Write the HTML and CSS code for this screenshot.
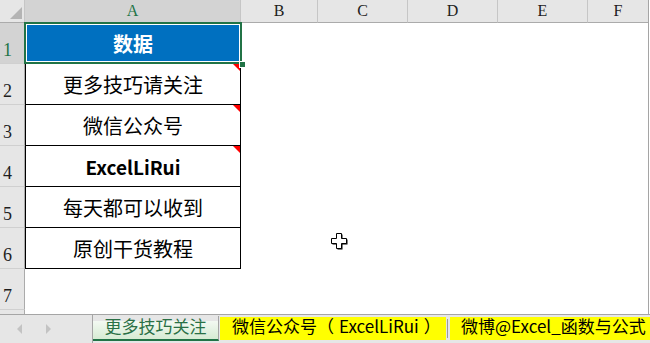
FILE: index.html
```html
<!DOCTYPE html>
<html lang="zh-CN">
<head>
    <meta charset="UTF-8">
    <meta name="viewport" content="width=device-width, initial-scale=1.0">
    <title>数据</title>
    <link rel="stylesheet" href="styles.css">
</head>
<body>

<div class="sheet">
    <div class="head">
        <div class="corner"><span class="corner-tri"></span></div>
        <div class="ch ch-a active">A</div>
        <div class="ch ch-b">B</div>
        <div class="ch ch-mid">C</div>
        <div class="ch ch-mid">D</div>
        <div class="ch ch-mid">E</div>
        <div class="ch ch-f">F</div>
    </div>

    <div class="row">
        <div class="rh active">1</div>
        <div class="cell title">数据<span class="sel"></span><span class="handle"></span></div>
    </div>
    <div class="row">
        <div class="rh">2</div>
        <div class="cell boxed note">更多技巧请关注</div>
    </div>
    <div class="row">
        <div class="rh">3</div>
        <div class="cell boxed note">微信公众号</div>
    </div>
    <div class="row">
        <div class="rh">4</div>
        <div class="cell boxed note bold">ExcelLiRui</div>
    </div>
    <div class="row">
        <div class="rh">5</div>
        <div class="cell boxed">每天都可以收到</div>
    </div>
    <div class="row">
        <div class="rh">6</div>
        <div class="cell boxed">原创干货教程</div>
    </div>
    <div class="row">
        <div class="rh">7</div>
    </div>
    <div class="row row-cut">
        <div class="rh"></div>
    </div>
</div>

<div class="tabs">
    <div class="tab-nav">
        <span class="arrow arrow-left"></span>
        <span class="arrow arrow-right"></span>
    </div>
    <div class="tab tab-active">更多技巧关注</div>
    <div class="tab tab-yellow tab-wide">微信公众号（<span class="tab-name">ExcelLiRui</span>）</div>
    <div class="tab-sep"></div>
    <div class="tab tab-yellow tab-last">微博@Excel_函数与公式</div>
</div>

<!-- mouse cursor over the sheet -->
<svg class="cursor" width="18" height="19" viewBox="0 0 18 19">
    <path d="M6.5 2.5h5v5h5v5h-5v5h-5v-5h-5v-5h5z" fill="#000"/>
    <path d="M5.5 1.5h5v5h5v5h-5v5h-5v-5h-5v-5h5z" fill="#fff" stroke="#000" stroke-width="1"/>
</svg>

</body>
</html>
```

FILE: styles.css
```css
/* Excel-like sheet */
* {
    box-sizing: border-box;
}
body {
    margin: 0;
    width: 650px;
    height: 343px;
    overflow: hidden;
    background: #ffffff;
    font-family: "Noto Sans CJK SC", sans-serif;
    position: relative;
}
.sheet {
    width: 649px;
    height: 314px;
    border-right: 1px solid #a5a5a5;
    overflow: hidden;
}
.head {
    display: flex;
    height: 23px;
}
.head > div {
    height: 23px;
    background: #e6e6e6;
    border-bottom: 1px solid #ababab;
    border-right: 1px solid #c6c6c6;
    font: 16px/22px "Liberation Serif", serif;
    color: #1e1e1e;
    text-align: center;
}
.corner {
    width: 25px;
    display: flex;
    justify-content: flex-end;
    align-items: flex-end;
    padding: 0 2px 3px 0;
}
.corner-tri {
    width: 0;
    height: 0;
    border-left: 12px solid transparent;
    border-bottom: 12px solid #b4b4b4;
}
.ch-a { width: 216px; }
.ch-b { width: 77px; }
.ch-mid { width: 90px; }
.ch-f { width: 60px; }
.head .ch-f { border-right: none; }
.head .active {
    background: #d3d3d3;
    color: #217346;
}
.row {
    display: flex;
    height: 41px;
}
.row-cut {
    height: 4px;
}
.rh {
    width: 25px;
    height: 100%;
    background: #e6e6e6;
    border-right: 1px solid #ababab;
    border-bottom: 1px solid #d0d0d0;
    font: 18px/18px "Liberation Serif", serif;
    color: #1e1e1e;
    display: flex;
    align-items: flex-end;
    padding: 0 0 4px 3px;
}
.rh.active {
    background: #d3d3d3;
    color: #217346;
}
.cell {
    width: 216px;
    height: 41px;
    display: flex;
    align-items: center;
    justify-content: center;
    font-size: 20px;
    color: #000;
    position: relative;
}
.boxed {
    border: 1px solid #000;
    border-top: none;
}
.bold {
    font-weight: bold;
    font-size: 19px;
}
.title {
    background: #0070c0;
    color: #ffffff;
    font-weight: bold;
}
.sel {
    position: absolute;
    top: -1px;
    left: -1px;
    right: -1px;
    bottom: 0;
    border: 2px solid #217346;
    box-shadow: inset 0 0 0 1px #ffffff;
}
.handle {
    position: absolute;
    right: -5px;
    bottom: -4px;
    width: 7px;
    height: 7px;
    background: #217346;
    border: 1px solid #ffffff;
    z-index: 2;
}
.note::after {
    content: "";
    position: absolute;
    top: 0;
    right: 0;
    border-top: 7px solid #ff0000;
    border-left: 7px solid transparent;
}
.tabs {
    display: flex;
    align-items: flex-start;
    height: 29px;
    background: #e6e6e6;
    border-top: 1px solid #a5a5a5;
    overflow: hidden;
}
.tab-nav {
    width: 93px;
    height: 100%;
    border-right: 1px solid #a5a5a5;
    display: flex;
    align-items: center;
    gap: 24px;
    padding-left: 17px;
}
.arrow {
    width: 0;
    height: 0;
    border-top: 5px solid transparent;
    border-bottom: 5px solid transparent;
}
.arrow-left { border-right: 5px solid #c3c3c3; }
.arrow-right { border-left: 5px solid #c3c3c3; }
.tab {
    margin-top: 2px;
    height: 23px;
    font-size: 17px;
    line-height: 17px;
    white-space: nowrap;
}
.tab-active {
    width: 126px;
    height: 25px;
    margin-top: 1px;
    text-align: center;
    color: #2a7046;
    background: linear-gradient(to bottom, #e6e6e6 0, #e6e6e6 5px, #f3f9f2 5px, #d6ebd3 100%);
    border-right: 1px solid #a5a5a5;
    border-bottom: 2px solid #217346;
    padding-top: 1px;
}
.tab-yellow {
    background: #ffff00;
    color: #000;
}
.tab-wide {
    width: 226px;
    margin-left: 1px;
    padding-left: 12px;
}
.tab-name {
    padding: 0 5px;
}
.tab-sep {
    width: 1px;
    height: 19px;
    margin: 4px 2px 0 1px;
    background: #9a9a9a;
}
.tab-last {
    flex: 1;
    padding-left: 11px;
    overflow: hidden;
}
.cursor {
    position: absolute;
    left: 331px;
    top: 232px;
}
```
